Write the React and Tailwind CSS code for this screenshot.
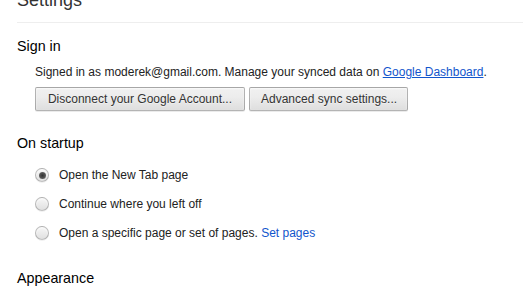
export default function App() {
  const Radio = ({ checked }) => (
    <span className="relative w-[14px] h-[14px] shrink-0 rounded-full border border-[rgba(0,0,0,0.22)] bg-[linear-gradient(#f7f7f7,#eeeeee_38%,#e0e0e0)] shadow-[0_1px_0_rgba(0,0,0,0.06),inset_0_1px_2px_rgba(255,255,255,0.75)] flex items-center justify-center">
      {checked && <span className="w-[7px] h-[7px] rounded-full bg-[radial-gradient(#333,#555_55%,#888)]" />}
    </span>
  );
  const btn =
    "h-[24px] px-[11px] whitespace-nowrap rounded-[2px] border border-[rgba(0,0,0,0.25)] bg-[linear-gradient(#f0f0f0,#ededed_38%,#dedede)] shadow-[0_1px_0_rgba(0,0,0,0.08),inset_0_1px_2px_rgba(255,255,255,0.75)] text-[#333] text-[12px] leading-[22px] [text-shadow:0_1px_0_#f0f0f0]";
  return (
    <div className="w-[523px] h-[292px] overflow-hidden bg-white pl-[17px] font-['Liberation_Sans',Arial,sans-serif] text-[#222]">
      <h1 className="-mt-[11px] h-[22px] text-[18px] leading-[22px] text-[#333] whitespace-nowrap">Settings</h1>
      <div className="mt-[11px] h-px bg-[#eeeeee]" />

      <h3 className="mt-[14px] h-[18px] text-[14.3px] leading-[18px] text-black">Sign in</h3>
      <div className="ml-[18px]">
        <p className="mt-[8.5px] h-[16px] text-[12px] leading-[16px] whitespace-nowrap">
          Signed in as moderek@gmail.com. Manage your synced data on{" "}
          <span className="text-[#15c] underline">Google Dashboard</span>.
        </p>
        <div className="mt-[7.5px] flex gap-[4px]">
          <button className={`${btn} w-[210px]`}>Disconnect your Google Account...</button>
          <button className={`${btn} w-[159px]`}>Advanced sync settings...</button>
        </div>
      </div>

      <h3 className="mt-[23px] h-[18px] text-[14.3px] leading-[18px] text-black">On startup</h3>
      <div className="mt-[8.5px] ml-[18px] flex flex-col text-[12px]">
        <div className="h-[29px] flex items-center gap-[10px]">
          <Radio checked />
          <span>Open the New Tab page</span>
        </div>
        <div className="h-[29px] flex items-center gap-[10px]">
          <Radio />
          <span>Continue where you left off</span>
        </div>
        <div className="h-[29px] flex items-center gap-[10px]">
          <Radio />
          <span>
            Open a specific page or set of pages. <span className="text-[#15c]">Set pages</span>
          </span>
        </div>
      </div>

      <h3 className="mt-[21.5px] h-[18px] text-[14.3px] leading-[18px] text-black">Appearance</h3>
    </div>
  );
}
